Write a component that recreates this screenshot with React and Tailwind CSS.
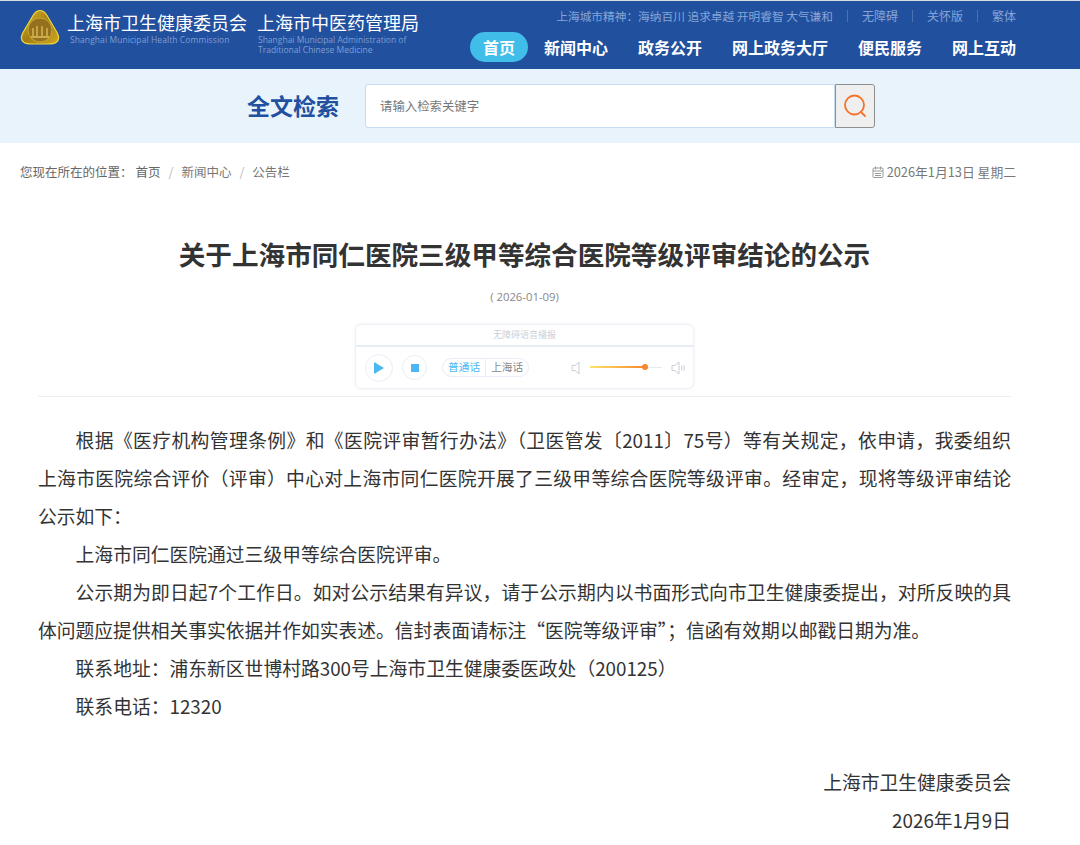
import { Fragment } from 'react';

const CJK = "font-['Noto_Sans_CJK_SC','Noto_Sans',sans-serif]";

const navItems = ['新闻中心', '政务公开', '网上政务大厅', '便民服务', '网上互动'];
const crumbs = ['新闻中心', '公告栏'];

const Logo = () => (
    <svg width="40" height="38" viewBox="0 0 40 38" className="shrink-0">
        <defs>
            <linearGradient id="gold" x1="0" y1="0" x2="1" y2="1">
                <stop offset="0" stopColor="#d9bc2c" />
                <stop offset="0.5" stopColor="#a67c14" />
                <stop offset="1" stopColor="#cfa922" />
            </linearGradient>
        </defs>
        <path d="M20 1.5c3 0 5 1.500 7 5l10 17c2.500 4.500 2 8-1 10-2 1.300-4 1.500-8 1.500H12c-4 0-6-.2-8-1.500-3-2-3.500-5.500-1-10l10-17c2-3.500 4-5 7-5z" fill="url(#gold)" stroke="#ecd63e" strokeWidth="1.200" />
        <circle cx="20" cy="21" r="12" fill="#94701f" stroke="#c9a92f" strokeWidth="1" />
        <path d="M11 28h18M13 27v-8M17 27v-10M22 27v-10M27 27v-8" stroke="#dcc25a" strokeWidth="1.300" fill="none" />
    </svg>
);

const SpeakerIcon = ({ loud }) => (
    <svg width={loud ? 15 : 10} height="14" viewBox={loud ? '0 0 15 14' : '0 0 10 14'} fill="none" stroke="#c9ced6" strokeWidth="1">
        <path d="M1 4.500h3L8 1v12L4 9.500H1z" />
        {loud && <path d="M10.500 5c.7 1.200.7 2.800 0 4M12.500 4c1.100 1.800 1.100 4.200 0 6" />}
    </svg>
);

const Divider = () => <span className="w-px h-3 bg-[#4a71b3] mx-[14px]"></span>;

const Header = () => (
    <header className="h-[69px] bg-[#21509f] border-t border-[#d9dde3] flex justify-between pl-5 pr-[64px]">
        <div className="flex items-start pt-2">
            <Logo />
            <div className="ml-[7px] w-[180px]">
                <div className="text-[18px] leading-6 mt-[1px] text-white whitespace-nowrap">上海市卫生健康委员会</div>
                <div className="text-[8.500px] leading-[10px] mt-[1px] ml-[3px] text-[#7f9fd2] tracking-[0.08px] whitespace-nowrap font-['Open_Sans',sans-serif]">Shanghai Municipal Health Commission</div>
            </div>
            <div className="ml-[10px] w-[165px]">
                <div className="text-[18px] leading-6 mt-[1px] text-white whitespace-nowrap">上海市中医药管理局</div>
                <div className="text-[8.500px] leading-[10px] mt-[1px] ml-[1px] text-[#7f9fd2] font-['Open_Sans',sans-serif]">Shanghai Municipal Administration of Traditional Chinese Medicine</div>
            </div>
        </div>
        <div className="flex flex-col items-end">
            <div className="flex items-center h-[30px] text-[12px] text-[#86a5d6] whitespace-nowrap">
                <span className="text-[11.700px]">上海城市精神：海纳百川 追求卓越 开明睿智 大气谦和</span>
                <Divider />
                <span>无障碍</span>
                <Divider />
                <span>关怀版</span>
                <Divider />
                <span>繁体</span>
            </div>
            <nav className="flex items-center gap-[30px] mt-[1px] text-[16px] font-bold text-white whitespace-nowrap">
                <span className="w-[58px] h-[30px] -mr-[14px] rounded-[15px] bg-[#41bdea] flex items-center justify-center">首页</span>
                {navItems.map((item) => (
                    <span key={item} className="leading-[30px]">{item}</span>
                ))}
            </nav>
        </div>
    </header>
);

const SearchBar = () => (
    <div className="h-[74px] bg-[#e8f3fc] flex items-center pl-[247px]">
        <div className="w-[118px] text-[23px] leading-[30px] -mt-[3px] font-bold text-[#21509f]">全文检索</div>
        <div className="w-[470px] h-[44px] bg-white border border-[#c5dcf3] rounded-l-[3px] flex items-center pl-[14px] text-[12.400px] text-[#777]">请输入检索关键字</div>
        <div className="w-[40px] h-[44px] bg-[#efefef] border border-[#8f8f8f] rounded-r-[3px] flex items-center justify-center">
            <svg width="26" height="26" viewBox="0 0 26 26" fill="none" stroke="#f4732a" strokeWidth="1.800" strokeLinecap="round">
                <circle cx="12.500" cy="12" r="9.500" />
                <path d="M19 19l4 4" />
            </svg>
        </div>
    </div>
);

const Breadcrumb = () => (
    <div className="h-[58px] flex items-center justify-between pl-5 pr-[64px] text-[12.500px] text-[#666]">
        <div className="flex items-center">
            <span className="mr-[3px]">您现在所在的位置：</span>
            <span>首页</span>
            {crumbs.map((c) => (
                <Fragment key={c}>
                    <span className="mx-[8px] text-[#bbb]">/</span>
                    <span className="text-[#777]">{c}</span>
                </Fragment>
            ))}
        </div>
        <div className="flex items-center gap-[3px] text-[12.800px] text-[#777]">
            <svg width="12" height="12" viewBox="0 0 12 12" fill="none" stroke="#999" strokeWidth="1">
                <rect x="1" y="2" width="10" height="9.500" rx="1" />
                <path d="M1 5h10M3.500 .5v3M8.500 .5v3M3 7.500h6M3 9.500h6" />
            </svg>
            <span>2026年1月13日 星期二</span>
        </div>
    </div>
);

const Player = () => (
    <div className="w-[339px] h-[65px] mx-auto bg-white border border-[#f0f2f6] rounded-[6px] shadow-[0_0_3px_rgba(200,210,225,0.35)]">
        <div className="h-[22px] border-b-2 border-[#e6edf5] flex items-center justify-center text-[9px] text-[#ccd0d8]">无障碍语音播报</div>
        <div className="flex items-center h-[41px] pl-[9px]">
            <div className="w-[28px] h-[28px] rounded-full border border-[#e8edf6] flex items-center justify-center">
                <svg width="10" height="12" viewBox="0 0 10 12"><path d="M0 0l10 6-10 6z" fill="#4ab8f5" /></svg>
            </div>
            <div className="w-[25px] h-[25px] ml-[9px] rounded-full border border-[#e8edf6] flex items-center justify-center">
                <div className="w-2 h-2 bg-[#4ab8f5]"></div>
            </div>
            <div className="ml-[15px] h-[19px] flex items-center border border-[#e8edf6] rounded-[10px] text-[10.700px]">
                <span className="px-[5px] text-[#4ab8f5]">普通话</span>
                <span className="w-px h-full bg-[#e8edf6]"></span>
                <span className="px-[5px] text-[#888]">上海话</span>
            </div>
            <div className="ml-[42px]"><SpeakerIcon /></div>
            <div className="relative ml-[9px] w-[72px] h-px bg-[#e6e9ef]">
                <div className="h-[2px] -mt-px w-[56px] bg-gradient-to-r from-[#fde36a] to-[#f6862a]"></div>
                <div className="absolute left-[52px] -top-[3px] w-[6px] h-[6px] rounded-full bg-[#f6862a]"></div>
            </div>
            <div className="ml-[9px]"><SpeakerIcon loud /></div>
        </div>
    </div>
);

const Article = () => (
    <main className="pl-[38px] pr-[69px]">
        <h1 className="text-[26.600px] leading-[38px] font-bold text-[#333] text-center mt-[34px] whitespace-nowrap">关于上海市同仁医院三级甲等综合医院等级评审结论的公示</h1>
        <div className="text-[11.300px] leading-[14px] text-[#888] text-center mt-[17px] font-['Open_Sans',sans-serif]">( 2026-01-09)</div>
        <div className="mt-[20px] pb-[7px] border-b border-[#eee]">
            <Player />
        </div>
        <div className="mt-[24px] text-[18.800px] leading-[38px] text-[#333] text-justify">
            <p className="indent-[2em]">根据《医疗机构管理条例》和《医院评审暂行办法》（卫医管发〔2011〕75号）等有关规定，依申请，我委组织上海市医院综合评价（评审）中心对上海市同仁医院开展了三级甲等综合医院等级评审。经审定，现将等级评审结论公示如下：</p>
            <p className="indent-[2em]">上海市同仁医院通过三级甲等综合医院评审。</p>
            <p className="indent-[2em]">公示期为即日起7个工作日。如对公示结果有异议，请于公示期内以书面形式向市卫生健康委提出，对所反映的具体问题应提供相关事实依据并作如实表述。信封表面请标注“医院等级评审”；信函有效期以邮戳日期为准。</p>
            <p className="indent-[2em]">联系地址：浦东新区世博村路300号上海市卫生健康委医政处（200125）</p>
            <p className="indent-[2em]">联系电话：12320</p>
            <p className="text-right mt-[38px]">上海市卫生健康委员会</p>
            <p className="text-right">2026年1月9日</p>
        </div>
    </main>
);

export default function App() {
    return (
        <div className={`w-[1080px] h-[845px] overflow-hidden bg-white ${CJK}`}>
            <Header />
            <SearchBar />
            <Breadcrumb />
            <Article />
        </div>
    );
}
